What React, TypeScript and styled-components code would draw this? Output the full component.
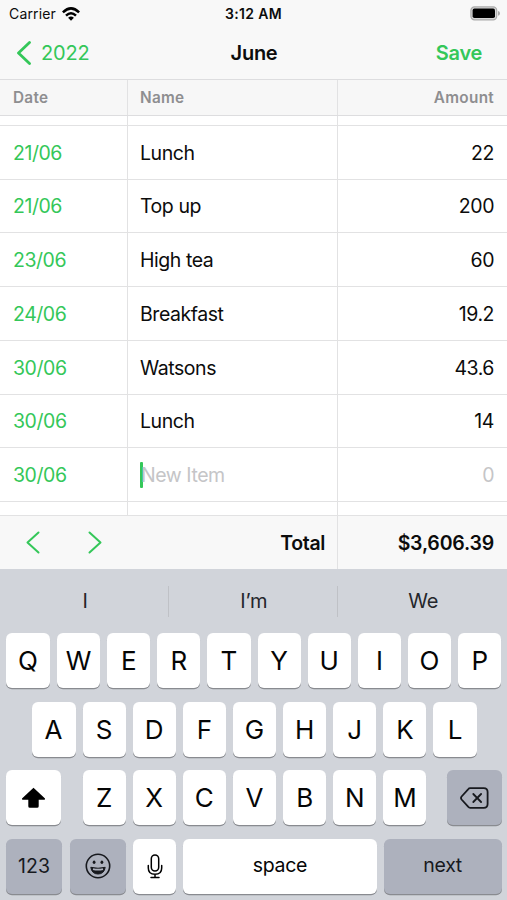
import React from 'react';
import styled, { createGlobalStyle } from 'styled-components';

const GlobalStyle = createGlobalStyle`
  * { box-sizing: border-box; }
  body { margin: 0; background: #fff; font-family: Inter, "Liberation Sans", sans-serif; }
`;

const green = '#34c759';
const line = '#e2e2e3';

const Screen = styled.main`
  width: 507px;
  height: 900px;
  display: flex;
  flex-direction: column;
  overflow: hidden;
  background: #fff;
  color: #0c0c0c;
`;

const StatusBar = styled.div`
  height: 27px;
  flex: none;
  display: grid;
  grid-template-columns: 1fr auto 1fr;
  align-items: center;
  padding: 0 7px 0 9px;
  background: #f8f8f8;
`;

const Carrier = styled.div`
  display: flex;
  align-items: center;
  gap: 6px;
  font-size: 14px;
  letter-spacing: 0.15px;
`;

const Clock = styled.div`
  font-size: 14px;
  font-weight: 600;
  letter-spacing: 0.35px;
  margin-left: -2px;
`;

const BatterySlot = styled.div`
  display: flex;
  justify-content: flex-end;
`;

const NavBar = styled.header`
  height: 53px;
  flex: none;
  display: grid;
  grid-template-columns: 1fr auto 1fr;
  align-items: center;
  padding: 0 25px 0 17px;
  background: #f8f8f8;
  border-bottom: 1px solid #dddddf;
`;

const Back = styled.div`
  display: flex;
  align-items: center;
  gap: 10px;
  color: ${green};
  font-size: 20px;
  letter-spacing: -0.2px;
`;

const Title = styled.h1`
  margin: 0;
  padding-left: 9px;
  font-size: 20px;
  font-weight: 600;
  letter-spacing: -0.25px;
`;

const Save = styled.div`
  text-align: right;
  color: ${green};
  font-size: 20px;
  font-weight: 600;
  letter-spacing: -0.3px;
`;

const Columns = styled.div`
  display: grid;
  grid-template-columns: 128px 210px 169px;
  flex: none;
`;

const HeadRow = styled(Columns)`
  height: 36px;
  background: #f7f7f7;
  border-bottom: 1px solid #dddddf;
  font-size: 15.3px;
  font-weight: 600;
  letter-spacing: 0.3px;
`;

const Cell = styled.div<{ $end?: boolean; $date?: boolean; $open?: boolean; $faint?: boolean }>`
  display: flex;
  align-items: center;
  justify-content: ${p => (p.$end ? 'flex-end' : 'flex-start')};
  padding: 1px 13px 0 ${p => (p.$date ? 13 : 12)}px;
  border-right: ${p => (p.$open ? 'none' : `1px solid ${line}`)};
  ${p => p.$date && `color: ${green};`}
  ${p => p.$faint && 'color: #c5c5c7;'}
`;

const HeadCell = styled(Cell)`
  padding-top: 0;
  color: #8e8e90;
`;

const TableBody = styled.section`
  height: 399px;
  flex: none;
  overflow: hidden;
`;

const BodyRow = styled(Columns)<{ $height?: number }>`
  height: ${p => p.$height ?? 53.75}px;
  border-bottom: 1px solid ${line};
  font-size: 19.5px;
  letter-spacing: -0.45px;
`;

const Caret = styled.span`
  width: 3px;
  height: 26px;
  margin-right: -2px;
  border-radius: 1px;
  background: ${green};
`;

const TotalBar = styled(Columns)`
  height: 54px;
  background: #f8f8f8;
  border-top: 1px solid ${line};
  font-size: 19.5px;
  font-weight: 600;
  letter-spacing: -0.2px;
`;

const TotalLabel = styled(Cell)`
  padding-right: 12px;
  padding-top: 0;
  letter-spacing: -0.35px;
`;

const TotalValue = styled(Cell)`
  padding-top: 0;
`;

const Arrows = styled.div`
  display: flex;
  align-items: center;
  padding-left: 26px;
  gap: 48px;
`;

const Keyboard = styled.section`
  flex: 1;
  display: flex;
  flex-direction: column;
  background: #d1d4da;
`;

const Suggestions = styled.div`
  height: 64px;
  display: grid;
  grid-template-columns: 169px 168.5px 1fr;
  align-items: center;
`;

const Suggestion = styled.div`
  height: 31px;
  display: flex;
  align-items: center;
  justify-content: center;
  padding-left: 2px;
  border-right: 1px solid #bfc1c6;
  color: #24262b;
  font-size: 20px;
  letter-spacing: -0.3px;
  &:last-child { border-right: none; }
`;

const KeyRow = styled.div<{ $inset: number }>`
  height: 68.5px;
  display: flex;
  align-items: flex-start;
  gap: 7px;
  padding: 0 5.5px 0 ${p => p.$inset}px;
`;

const Key = styled.div<{ $width?: number; $dark?: boolean; $label?: boolean; $before?: number; $after?: number }>`
  width: ${p => p.$width ?? 43.15}px;
  height: 55px;
  flex: none;
  display: flex;
  align-items: center;
  justify-content: center;
  margin-left: ${p => p.$before ?? 0}px;
  margin-right: ${p => p.$after ?? 0}px;
  padding-bottom: ${p => (p.$label ? 2 : 0)}px;
  border-radius: 6px;
  background: ${p => (p.$dark ? '#adb1bd' : '#fff')};
  box-shadow: 0 1.3px 0 #898b90;
  color: ${p => (p.$dark ? '#17191e' : '#050505')};
  font-size: ${p => (p.$label ? 19.5 : 26)}px;
  font-weight: ${p => (p.$label ? 400 : 370)};
  letter-spacing: ${p => (p.$label ? -0.3 : 0)}px;
`;

const NumberKey = styled(Key)`
  padding-top: 2px;
  letter-spacing: 0.1px;
`;

const Chevron = ({ w, h, stroke, right }: { w: number; h: number; stroke: number; right?: boolean }) => (
  <svg width={w} height={h} viewBox={`0 0 ${w} ${h}`} fill="none" stroke={green} strokeWidth={stroke} strokeLinecap="round" strokeLinejoin="round">
    <path d={right ? `M1.5 1.5L${w - 1.5} ${h / 2}L1.5 ${h - 1.5}` : `M${w - 1.5} 1.5L1.5 ${h / 2}L${w - 1.5} ${h - 1.5}`} />
  </svg>
);

const Wifi = () => (
  <svg width="18" height="14" viewBox="0 0 18 14" fill="none" stroke="#000" strokeWidth="2.5">
    <path d="M.9 5.3Q9-2.6 17.1 5.3M4 8.6Q9 3.8 14 8.6" />
    <path d="M6.1 10.7Q9 8.2 11.9 10.7L9 13.7Z" fill="#000" stroke="none" />
  </svg>
);

const Battery = () => (
  <svg width="30" height="15" viewBox="0 0 30 15">
    <rect x=".9" y=".9" width="25.8" height="12.9" rx="3.6" fill="#d8d8d8" stroke="#aaa" strokeWidth="1.2" />
    <rect x="2.6" y="2.6" width="22.4" height="9.5" rx="1.8" fill="#000" />
    <path d="M28 5q2 .4 2 2.4t-2 2.4z" fill="#aaa" />
  </svg>
);

const Shift = () => (
  <svg width="25" height="22" viewBox="0 0 25 22">
    <path d="M12.5 .8L24 11.5Q24.4 12.7 23.1 12.7H17.7V19.2Q17.7 20.8 16.1 20.8H8.9Q7.3 20.8 7.3 19.2V12.7H1.9Q.6 12.7 1 11.5Z" fill="#000" />
  </svg>
);

const Backspace = () => (
  <svg width="29" height="22" viewBox="0 0 29 22" fill="none" stroke="#17191e" strokeWidth="1.8" strokeLinecap="round" strokeLinejoin="round">
    <path d="M10.2 1.2H23.7Q27.6 1.2 27.6 5V17Q27.6 20.8 23.7 20.8H10.2Q9 20.8 8.1 19.7L1.6 12.5Q.4 11 1.6 9.5L8.1 2.3Q9 1.2 10.2 1.2Z" />
    <path d="M13.3 7L21.1 15M21.1 7L13.3 15" />
  </svg>
);

const Emoji = () => (
  <svg width="26" height="26" viewBox="0 0 26 26" fill="none" stroke="#17191e" strokeWidth="1.6">
    <circle cx="13" cy="13" r="11.7" />
    <ellipse cx="9.1" cy="9.2" rx="1.4" ry="1.7" fill="#17191e" stroke="none" />
    <ellipse cx="16.9" cy="9.2" rx="1.4" ry="1.7" fill="#17191e" stroke="none" />
    <path d="M5.8 14.3Q13 16.2 20.2 14.3Q19.2 21 13 21T5.8 14.3Z" fill="#17191e" strokeWidth="1" />
    <path d="M8 16.1Q13 17.3 18 16.1" stroke="#adb1bd" strokeWidth="1.7" />
  </svg>
);

const Mic = () => (
  <svg width="16" height="25" viewBox="0 0 16 25" fill="none" stroke="#000" strokeWidth="1.5" strokeLinecap="round">
    <rect x="4.3" y="1" width="7.4" height="16" rx="3.7" />
    <path d="M1.3 11.5V14Q1.3 20.3 8 20.3T14.7 14V11.5M8 20.3V23.5M4 23.5H12" />
  </svg>
);

const entries = [
  ['21/06', 'Lunch', '22'],
  ['21/06', 'Top up', '200'],
  ['23/06', 'High tea', '60'],
  ['24/06', 'Breakfast', '19.2'],
  ['30/06', 'Watsons', '43.6'],
  ['30/06', 'Lunch', '14'],
];

const EmptyRow = ({ height }: { height: number }) => (
  <BodyRow $height={height}><Cell /><Cell /><Cell $open /></BodyRow>
);

export default function App() {
  return (
    <Screen>
      <GlobalStyle />
      <StatusBar>
        <Carrier>Carrier <Wifi /></Carrier>
        <Clock>3:12 AM</Clock>
        <BatterySlot><Battery /></BatterySlot>
      </StatusBar>
      <NavBar>
        <Back><Chevron w={14} h={24} stroke={2.8} />2022</Back>
        <Title>June</Title>
        <Save>Save</Save>
      </NavBar>
      <HeadRow>
        <HeadCell $date>Date</HeadCell>
        <HeadCell>Name</HeadCell>
        <HeadCell $end $open>Amount</HeadCell>
      </HeadRow>
      <TableBody>
        <EmptyRow height={9.75} />
        {entries.map(([date, name, amount], i) => (
          <BodyRow key={i}>
            <Cell $date>{date}</Cell>
            <Cell>{name}</Cell>
            <Cell $end $open>{amount}</Cell>
          </BodyRow>
        ))}
        <BodyRow>
          <Cell $date>30/06</Cell>
          <Cell $faint><Caret />New Item</Cell>
          <Cell $end $open $faint>0</Cell>
        </BodyRow>
        <EmptyRow height={53.75} />
      </TableBody>
      <TotalBar>
        <Arrows><Chevron w={14} h={23} stroke={2} /><Chevron w={14} h={23} stroke={2} right /></Arrows>
        <TotalLabel $end>Total</TotalLabel>
        <TotalValue $end $open>$3,606.39</TotalValue>
      </TotalBar>
      <Keyboard>
        <Suggestions>
          <Suggestion>I</Suggestion>
          <Suggestion>I’m</Suggestion>
          <Suggestion>We</Suggestion>
        </Suggestions>
        <KeyRow $inset={6}>
          {[...'QWERTYUIOP'].map((k, i) => <Key key={k} $width={i === 0 ? 44 : undefined}>{k}</Key>)}
        </KeyRow>
        <KeyRow $inset={31.5}>
          {[...'ASDFGHJKL'].map((k, i) => <Key key={k} $width={i === 0 ? 44 : undefined}>{k}</Key>)}
        </KeyRow>
        <KeyRow $inset={6}>
          <Key $width={55} $after={14.5}><Shift /></Key>
          {[...'ZXCVBNM'].map(k => <Key key={k}>{k}</Key>)}
          <Key $width={55} $dark $before={13.3}><Backspace /></Key>
        </KeyRow>
        <KeyRow $inset={6}>
          <NumberKey $width={56} $dark $label>123</NumberKey>
          <Key $width={56} $dark $before={1}><Emoji /></Key>
          <Key><Mic /></Key>
          <Key $width={193.5} $label>space</Key>
          <Key $width={118} $dark $label>next</Key>
        </KeyRow>
      </Keyboard>
    </Screen>
  );
}
